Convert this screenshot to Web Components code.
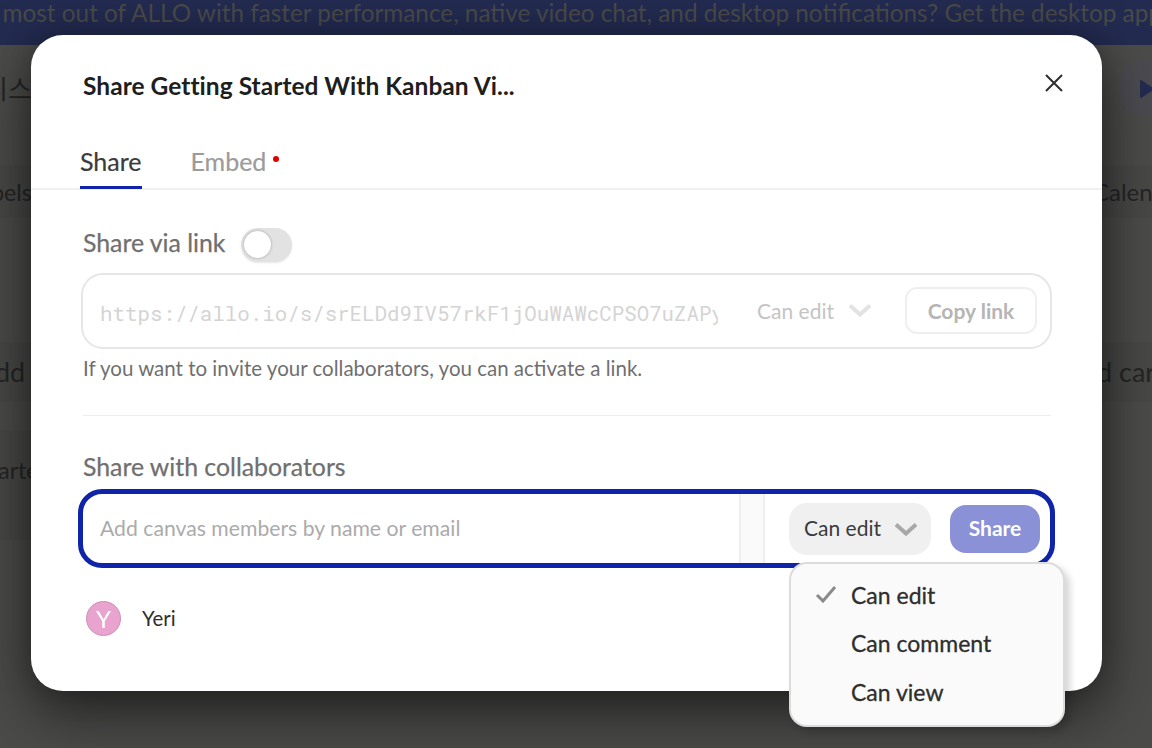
<!doctype html>
<html><head><meta charset="utf-8">
<style>
html,body{margin:0;height:100%;overflow:hidden}
body{background:#4a4a49;font-family:"Lato","Noto Sans CJK KR",sans-serif}
</style></head><body>
<share-page>
  <share-dialog></share-dialog>
</share-page>
<script>
class ShareTabs extends HTMLElement{constructor(){super();this.attachShadow({mode:'open'}).innerHTML=`<style>
:host{display:flex;gap:49px;height:58px;padding-left:49px;border-bottom:2px solid #f0f0f0;box-sizing:border-box;font-size:25px;line-height:30px}
.t{display:flex;align-items:flex-start;padding-top:14px;height:57px;box-sizing:border-box;color:#9b9b9b;position:relative;gap:7px;-webkit-text-stroke:.2px currentColor}
.on{color:#3b3b3b;border-bottom:3px solid #0f24a8}
i{width:6px;height:6px;border-radius:50%;background:#e00000;margin-top:10px}
</style><div class="t on">Share</div><div class="t">Embed<i></i></div>`}}
customElements.define('share-tabs',ShareTabs);

class ShareToggle extends HTMLElement{constructor(){super();this.attachShadow({mode:'open'}).innerHTML=`<style>
:host{display:block;width:51px;height:34px;margin-top:4px;border-radius:17px;background:#e2e2e2;position:relative;box-shadow:0 1px 2px rgba(0,0,0,.1)}
b{position:absolute;left:3px;top:3px;width:27px;height:27px;border-radius:50%;background:#fff;box-shadow:0 0 3px rgba(0,0,0,.3)}
</style><b></b>`}}
customElements.define('share-toggle',ShareToggle);

const chev=(c,w=24,h=14)=>`<svg width="${w}" height="${h}" viewBox="0 0 24 14" style="display:block;flex:none"><path d="M2 2.5 12 11.5 22 2.5" fill="none" stroke="${c}" stroke-width="4"/></svg>`;

class LinkField extends HTMLElement{constructor(){super();this.attachShadow({mode:'open'}).innerHTML=`<style>
:host{display:flex;align-items:center;box-sizing:border-box;height:76px;border:2px solid #e6e6e6;border-radius:22px;padding:0 13px 0 17px}
.u{width:618px;overflow:hidden;white-space:nowrap;font:20.8px/30px "Roboto Mono","Liberation Mono","DejaVu Sans Mono",monospace;color:#d4d4d4;flex:none;padding-top:4px}
.p{display:flex;align-items:center;gap:14px;margin:0 0 2px 39px;width:148px;flex:none;color:#c4c4c4;font-size:21px}
.c{margin:0 0 2px auto;width:132px;height:47px;box-sizing:border-box;border:2px solid #efefef;border-radius:12px;display:flex;align-items:center;justify-content:center;font-weight:700;font-size:21px;color:#b5b5b5}
</style><div class="u">https://allo.io/s/srELDd9IV57rkF1jOuWAWcCPSO7uZAPy</div><div class="p">Can edit ${chev('#e2e2e2')}</div><div class="c">Copy link</div>`}}
customElements.define('link-field',LinkField);

class InviteField extends HTMLElement{constructor(){super();this.attachShadow({mode:'open'}).innerHTML=`<style>
:host{display:flex;align-items:center;box-sizing:border-box;height:79px;border:5px solid #0f24a8;border-radius:24px;background:#fff;color:#3b3b3b}
.i{flex:1;padding:0 0 2px 17px;font-size:21.2px;color:#ababab}
.d{width:26px;align-self:stretch;background:#fafafa;border:solid #eee;border-width:0 2px;box-sizing:border-box}
.r{display:flex;align-items:center}
.s{margin-left:24px;width:142px;height:52px;border-radius:18px;background:#f0f0f0;display:flex;align-items:center;gap:13px;padding:0 0 2px 15px;box-sizing:border-box;font-size:21px}
.s svg{margin-top:2px}
.b{margin:0 10px 0 19px;width:90px;height:48px;box-sizing:border-box;padding-bottom:2px;border-radius:16px;background:#8a91d6;color:#fff;font-weight:700;font-size:21px;display:flex;align-items:center;justify-content:center}
</style><div class="i">Add canvas members by name or email</div><div class="d"></div><div class="r"><div class="s">Can edit ${chev('#a8a8a8')}</div><div class="b">Share</div></div>`}}
customElements.define('invite-field',InviteField);

class RoleMenu extends HTMLElement{constructor(){super();this.attachShadow({mode:'open'}).innerHTML=`<style>
:host{position:absolute;left:758px;top:527px;width:276px;height:165px;box-sizing:border-box;background:#fafafa;border:2px solid #dcdcdc;border-radius:18px;box-shadow:5px 5px 7px rgba(0,0,0,.16);padding:7px 0 0 60px;font-size:23px;color:#2e2e2e;line-height:48.3px;-webkit-text-stroke:.3px currentColor}
svg{position:absolute;left:24px;top:21px}
</style><svg width="22" height="18" viewBox="0 0 22 18"><path d="M2 10 8 16 20 2" fill="none" stroke="#8a8a8a" stroke-width="3"/></svg><div>Can edit</div><div>Can comment</div><div>Can view</div>`}}
customElements.define('role-menu',RoleMenu);

class ShareDialog extends HTMLElement{constructor(){super();this.attachShadow({mode:'open'}).innerHTML=`<style>
:host{position:absolute;left:31px;top:35px;width:1071px;height:656px;background:#fff;border-radius:32px;box-shadow:0 24px 60px rgba(0,0,0,.5),0 0 30px rgba(0,0,0,.25);display:block;color:#1e1e1e}
.head{height:97px;box-sizing:border-box;padding:35px 0 0 52px;font-weight:700;font-size:24.5px;letter-spacing:.04px;line-height:32px;position:relative}
.x{position:absolute;right:39px;top:39px}
.body{padding:0 51px 0 52px}
h3{margin:0;font-weight:400;font-size:24.8px;color:#6f6f6f;line-height:30px;-webkit-text-stroke:.25px currentColor}
.row{display:flex;align-items:center;gap:16px;margin-top:35px;height:36px}
link-field{margin:12px 0 0 -2px;width:971px}
.hint{font-size:20.5px;color:#6f6f6f;line-height:26px;margin-top:6px}
hr{border:0;border-top:1px solid #ececec;margin:34px 0 36px}
invite-field{margin:7px -4px 0 -5px}
.user{display:flex;align-items:center;margin:33px 0 0 3px;font-size:20.4px;color:#2e2e2e;gap:21px}
.n{padding-bottom:2px}
.av{width:35px;height:35px;border-radius:50%;background:#e8a3cf;border:1px solid #cf8fb8;box-sizing:border-box;color:#fff;font-size:24px;display:flex;align-items:center;justify-content:center}
</style><div class="head">Share Getting Started With Kanban Vi...<svg class="x" width="18" height="18" viewBox="0 0 18 18"><path d="M1 1 17 17M17 1 1 17" stroke="#2e2e2e" stroke-width="2"/></svg></div>
<share-tabs></share-tabs>
<div class="body"><div class="row"><h3>Share via link</h3><share-toggle></share-toggle></div>
<link-field></link-field><div class="hint">If you want to invite your collaborators, you can activate a link.</div><hr>
<h3>Share with collaborators</h3><invite-field></invite-field>
<div class="user"><div class="av">Y</div><div class="n">Yeri</div></div></div><role-menu></role-menu>`}}
customElements.define('share-dialog',ShareDialog);

class SharePage extends HTMLElement{constructor(){super();this.attachShadow({mode:'open'}).innerHTML=`<style>
:host{display:block;width:1152px;height:748px;position:relative;overflow:hidden;background:#4b4b4a;color:#252525;font-size:24px}
.banner{height:45px;background:#232b50;color:#4a4a4a;font-size:24.3px;line-height:26px;white-space:nowrap;text-indent:-84px;overflow:hidden}
.l,.r,.band,.play{position:absolute;white-space:nowrap}
.band{background:rgba(0,0,0,.03)}
.play{left:1120px;top:62px;width:52px;height:52px;border-radius:16px;background:#4a4a50}
.play svg{position:absolute;left:20px;top:17px}
</style><div class="banner">Get the most out of ALLO with faster performance, native video chat, and desktop notifications? Get the desktop app</div>
<div class="band" style="left:0;top:165px;width:1152px;height:53px"></div>
<div class="band" style="left:0;top:342px;width:1152px;height:60px"></div>
<div class="band" style="left:0;top:430px;width:60px;height:110px"></div>
<div class="play"><svg width="14" height="20" viewBox="0 0 14 20"><path d="M1 2 13 10 1 18Z" fill="#232b50" stroke="#232b50" stroke-width="2" stroke-linejoin="round"/></svg></div>
<div class="l" style="left:-16px;top:69px;font-size:26px">디스크</div><div class="l" style="left:-32px;top:178px;font-size:23px">Labels</div><div class="l" style="left:-23px;top:355px;font-size:27px">Add</div><div class="l" style="left:-22px;top:456px;font-size:23px">Started</div>
<div class="r" style="left:1093px;top:177px;font-size:24px">Calendar</div><div class="r" style="left:1097px;top:355px;font-size:27px">d card</div>
<slot></slot>`}}
customElements.define('share-page',SharePage);
</script></body></html>
